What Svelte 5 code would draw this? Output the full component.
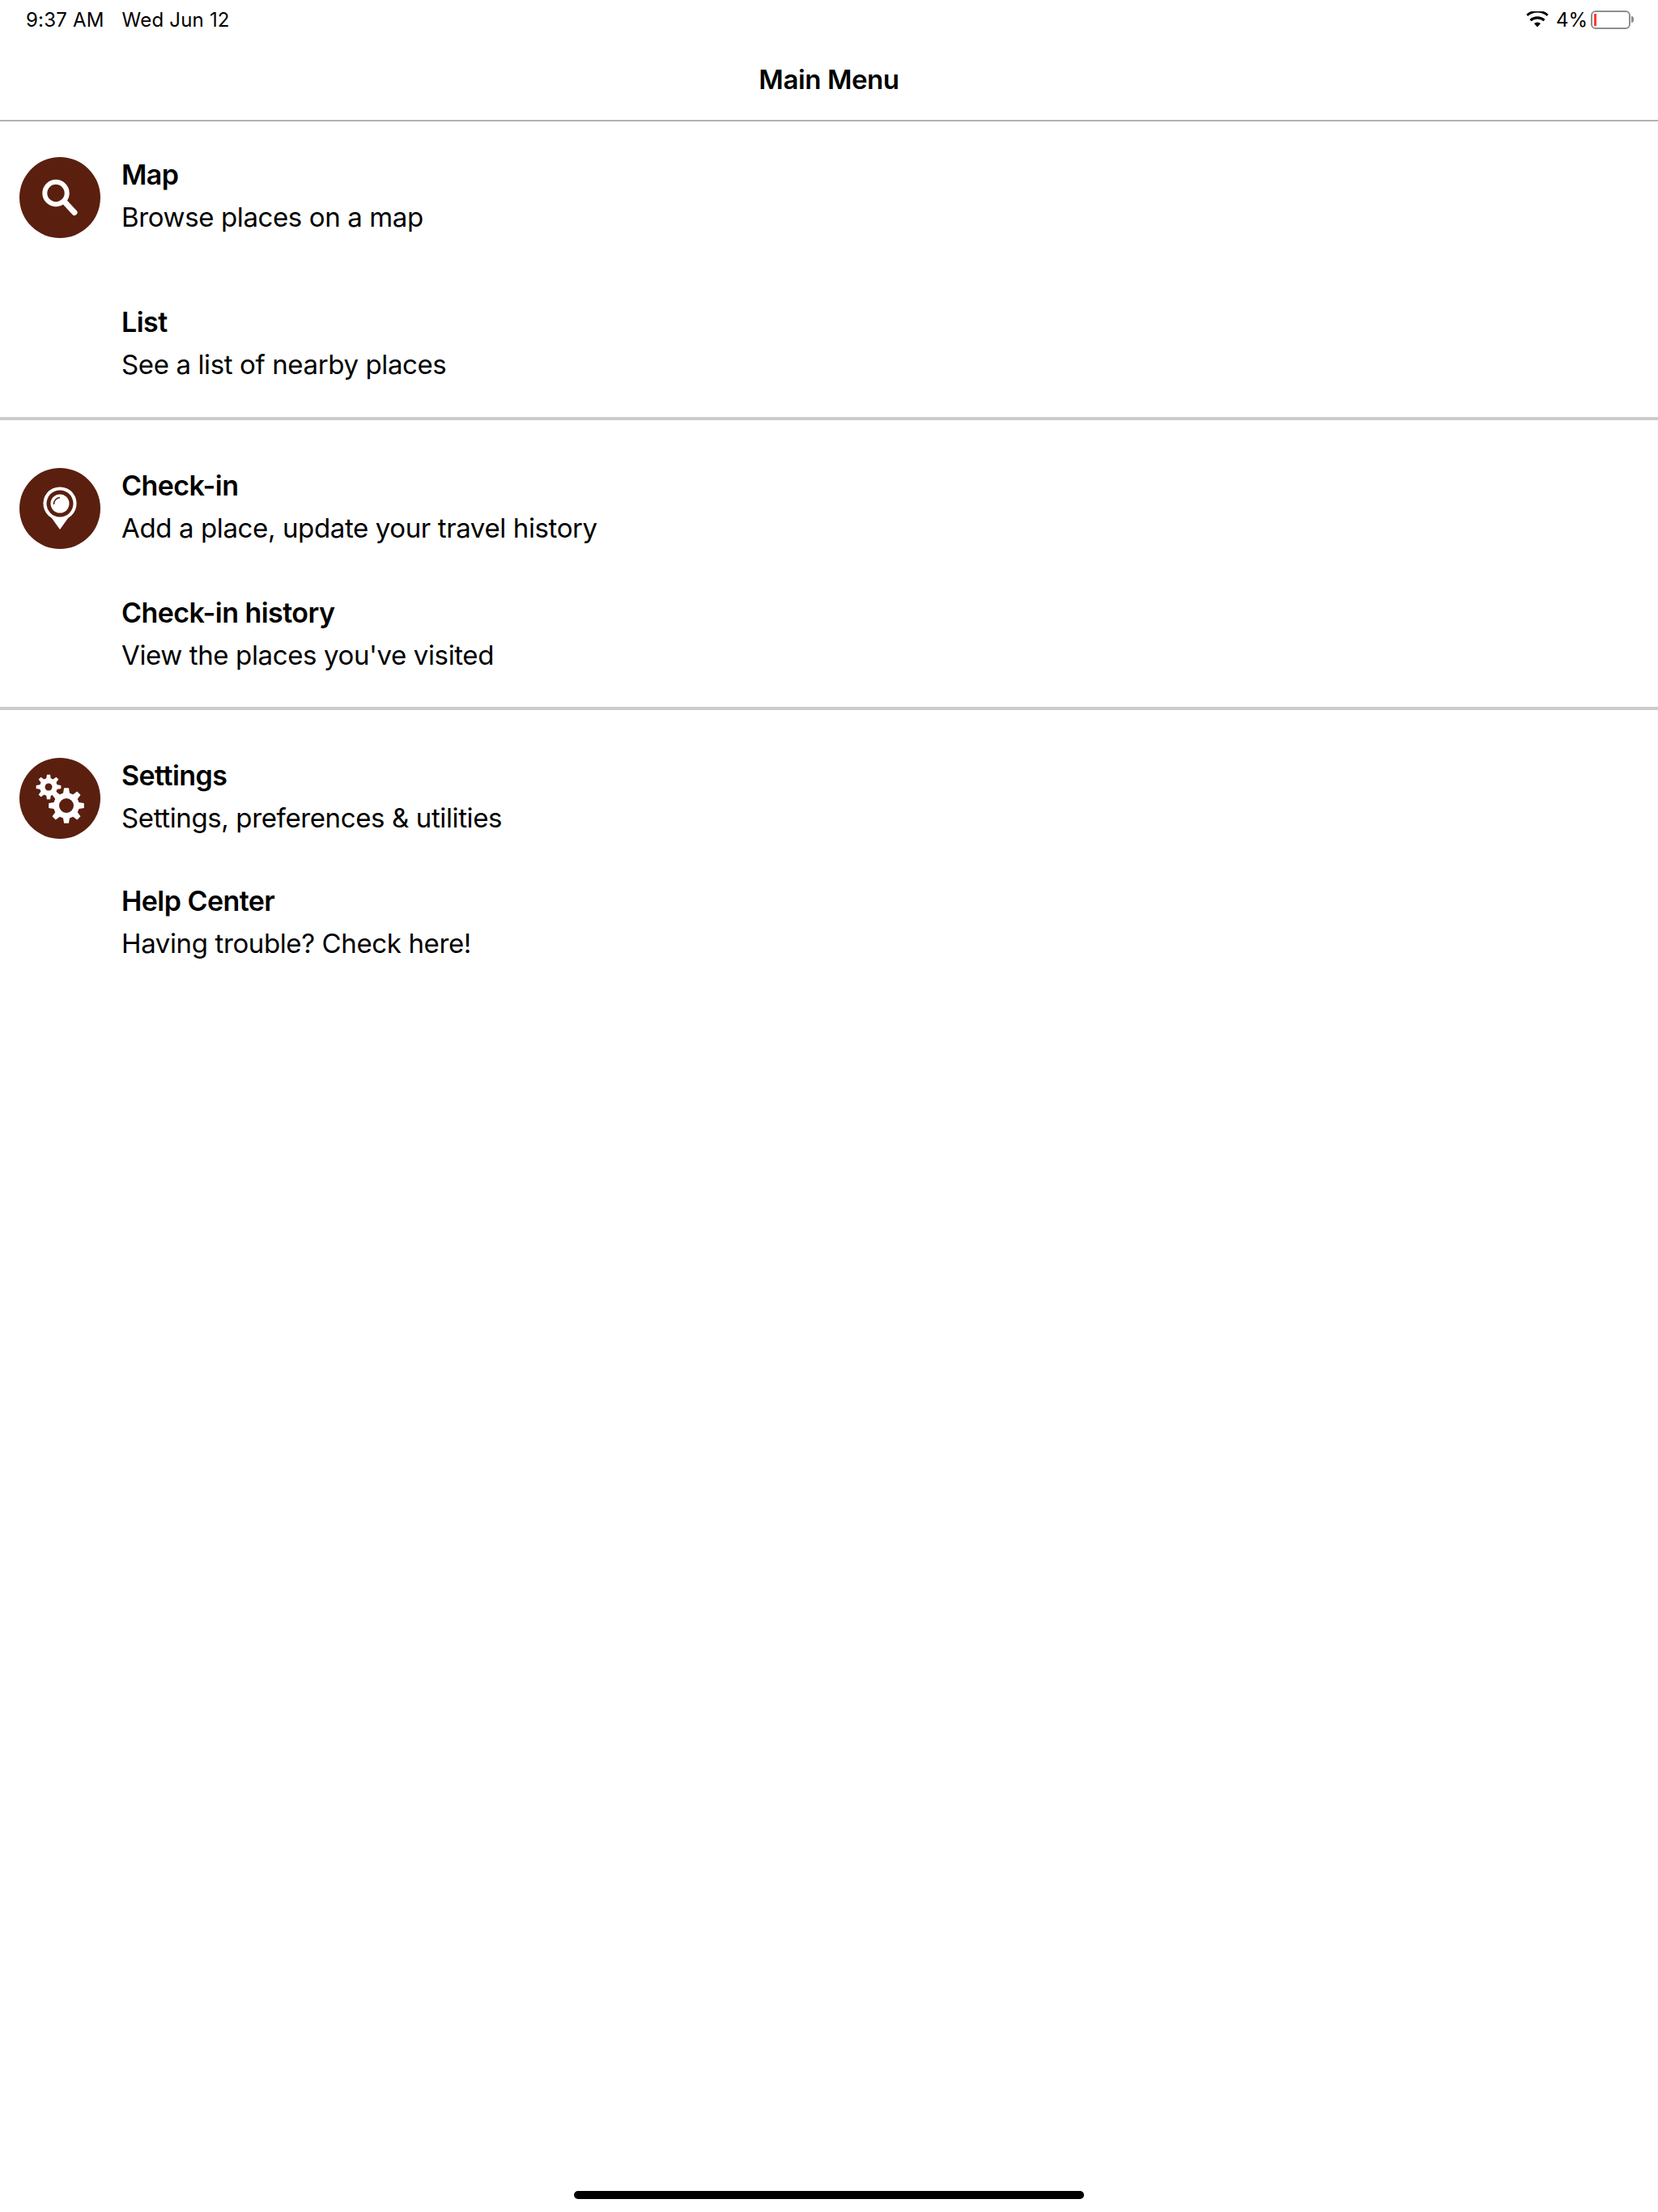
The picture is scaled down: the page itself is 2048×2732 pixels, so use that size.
<script>
    // builds a cog outline with a hole, for the settings icon
    function gear(cx, cy, outer, inner, hole, teeth){
        let d = ""
        const step = Math.PI * 2 / teeth
        for(let i = 0;i < teeth;i++){
            const a = i * step - Math.PI / 2
            const pts = [
                [inner, a - step * 0.32],
                [outer, a - step * 0.17],
                [outer, a + step * 0.17],
                [inner, a + step * 0.32]
            ]
            for(const [r, t] of pts){
                d += (d ? "L" : "M") + (cx + r * Math.cos(t)).toFixed(2) + " " + (cy + r * Math.sin(t)).toFixed(2)
            }
        }
        d += `Z M${cx - hole} ${cy}a${hole} ${hole} 0 1 0 ${hole * 2} 0a${hole} ${hole} 0 1 0 ${-hole * 2} 0Z`
        return d
    }

    const sections = [
        { icon: "search", items: [
            { title: "Map", text: "Browse places on a map" },
            { title: "List", text: "See a list of nearby places" }
        ]},
        { icon: "pin", items: [
            { title: "Check-in", text: "Add a place, update your travel history" },
            { title: "Check-in history", text: "View the places you've visited" }
        ]},
        { icon: "gears", items: [
            { title: "Settings", text: "Settings, preferences & utilities" },
            { title: "Help Center", text: "Having trouble? Check here!" }
        ]}
    ]
</script>

<div class="page">
    <div class="status">
        <div class="left">
            <span>9:37 AM</span>
            <span>Wed Jun 12</span>
        </div>
        <div class="right">
            <svg class="wifi" width="28" height="20" viewBox="0 0 30 22">
                <path d="M15 21.5 10.6 16.6a6.4 6.4 0 0 1 8.8 0Z" fill="#000"/>
                <path d="M6.8 12.6a12 12 0 0 1 16.4 0l2.3-2.6a15.6 15.6 0 0 0-21 0Z" fill="#000" transform="translate(0 1)"/>
                <path d="M2 7.6a19.2 19.2 0 0 1 26 0l2-2.4a22.4 22.4 0 0 0-30 0Z" fill="#000" transform="translate(0 -1)"/>
            </svg>
            <span class="pct">4%</span>
            <div class="battery">
                <div class="shell"><div class="level"></div></div>
                <div class="nub"></div>
            </div>
        </div>
    </div>
    <div class="nav">Main Menu</div>

    {#each sections as s}
        <section class={s.icon}>
            <div class="badge">
                {#if s.icon == "search"}
                    <svg width="100" height="100" viewBox="0 0 100 100">
                        <circle cx="45" cy="44.5" r="13.7" fill="none" stroke="#fff" stroke-width="6"/>
                        <path d="M55 54.5 68 68.5" stroke="#fff" stroke-width="7" stroke-linecap="round"/>
                    </svg>
                {:else if s.icon == "pin"}
                    <svg width="100" height="100" viewBox="0 0 100 100">
                        <path d="M50 76 40 62A20.6 20.6 0 1 1 60 62Z" fill="#fff"/>
                        <circle cx="50" cy="44" r="16.5" fill="#5a1f0f"/>
                        <circle cx="50" cy="44" r="11.5" fill="#fff"/>
                        <path d="M42.5 45a8 8 0 0 1 7.5-8.5" fill="none" stroke="#5a1f0f" stroke-width="1.5"/>
                    </svg>
                {:else}
                    <svg width="100" height="100" viewBox="0 0 100 100">
                        <path fill-rule="evenodd" fill="#fff" d={gear(36, 36, 15.5, 11, 4.5, 8)}/>
                        <path fill-rule="evenodd" fill="#fff" d={gear(58, 59, 22, 16, 9, 8)}/>
                    </svg>
                {/if}
            </div>
            <div class="items">
                {#each s.items as item}
                    <div class="item">
                        <div class="title">{item.title}</div>
                        <div class="text">{item.text}</div>
                    </div>
                {/each}
            </div>
        </section>
    {/each}

    <div class="home"></div>
</div>

<style>
    :global(body){
        margin: 0;
        background: #fff;
    }
    .page{
        position: relative;
        height: 2732px;
        font-family: Inter, "Liberation Sans", sans-serif;
        color: #000;
        overflow: hidden;
    }
    .status{
        display: flex;
        justify-content: space-between;
        align-items: center;
        height: 48px;
        padding: 0 30px 0 32px;
        font-size: 24px;
    }
    .left{
        display: flex;
        gap: 22px;
        letter-spacing: 0.2px;
    }
    .right{
        display: flex;
        align-items: center;
        gap: 7px;
    }
    .pct{
        margin: 0 -3px 0 2px;
    }
    .battery{
        display: flex;
        align-items: center;
        gap: 1px;
    }
    .shell{
        width: 49px;
        height: 23px;
        box-sizing: border-box;
        border: 2px solid #8e8e8e;
        border-radius: 6px;
        padding: 2px;
    }
    .level{
        width: 3px;
        height: 100%;
        background: #ff3b30;
    }
    .nub{
        width: 3px;
        height: 8px;
        background: #8e8e8e;
        border-radius: 0 3px 3px 0;
    }
    .nav{
        height: 102px;
        line-height: 100px;
        box-sizing: border-box;
        border-bottom: 2px solid #b2b2b2;
        text-align: center;
        font-size: 33px;
        font-weight: 600;
        letter-spacing: -0.4px;
    }
    section{
        display: flex;
        border-bottom: 4px solid #cccccc;
        box-sizing: border-box;
    }
    section.search{
        height: 369px;
        padding-top: 44px;
    }
    section.pin{
        height: 358px;
        padding-top: 59px;
    }
    section.gears{
        border-bottom: 0;
        padding-top: 59px;
    }
    .badge{
        flex: none;
        width: 100px;
        height: 100px;
        margin: 0 26px 0 24px;
        border-radius: 50%;
        background: #5a1f0f;
    }
    .badge svg{
        display: block;
    }
    .items{
        display: flex;
        flex-direction: column;
        gap: 88px;
        padding-top: 1px;
    }
    .pin .items{
        gap: 63px;
    }
    .gears .items{
        gap: 61px;
    }
    .title{
        font-size: 34px;
        font-weight: 600;
        line-height: 41px;
        letter-spacing: -0.55px;
    }
    .text{
        font-size: 33px;
        font-weight: 400;
        line-height: 41px;
        margin-top: 12px;
        letter-spacing: -0.38px;
    }
    .home{
        position: absolute;
        left: 709px;
        bottom: 16px;
        width: 630px;
        height: 10px;
        border-radius: 5px;
        background: #000;
    }
</style>
